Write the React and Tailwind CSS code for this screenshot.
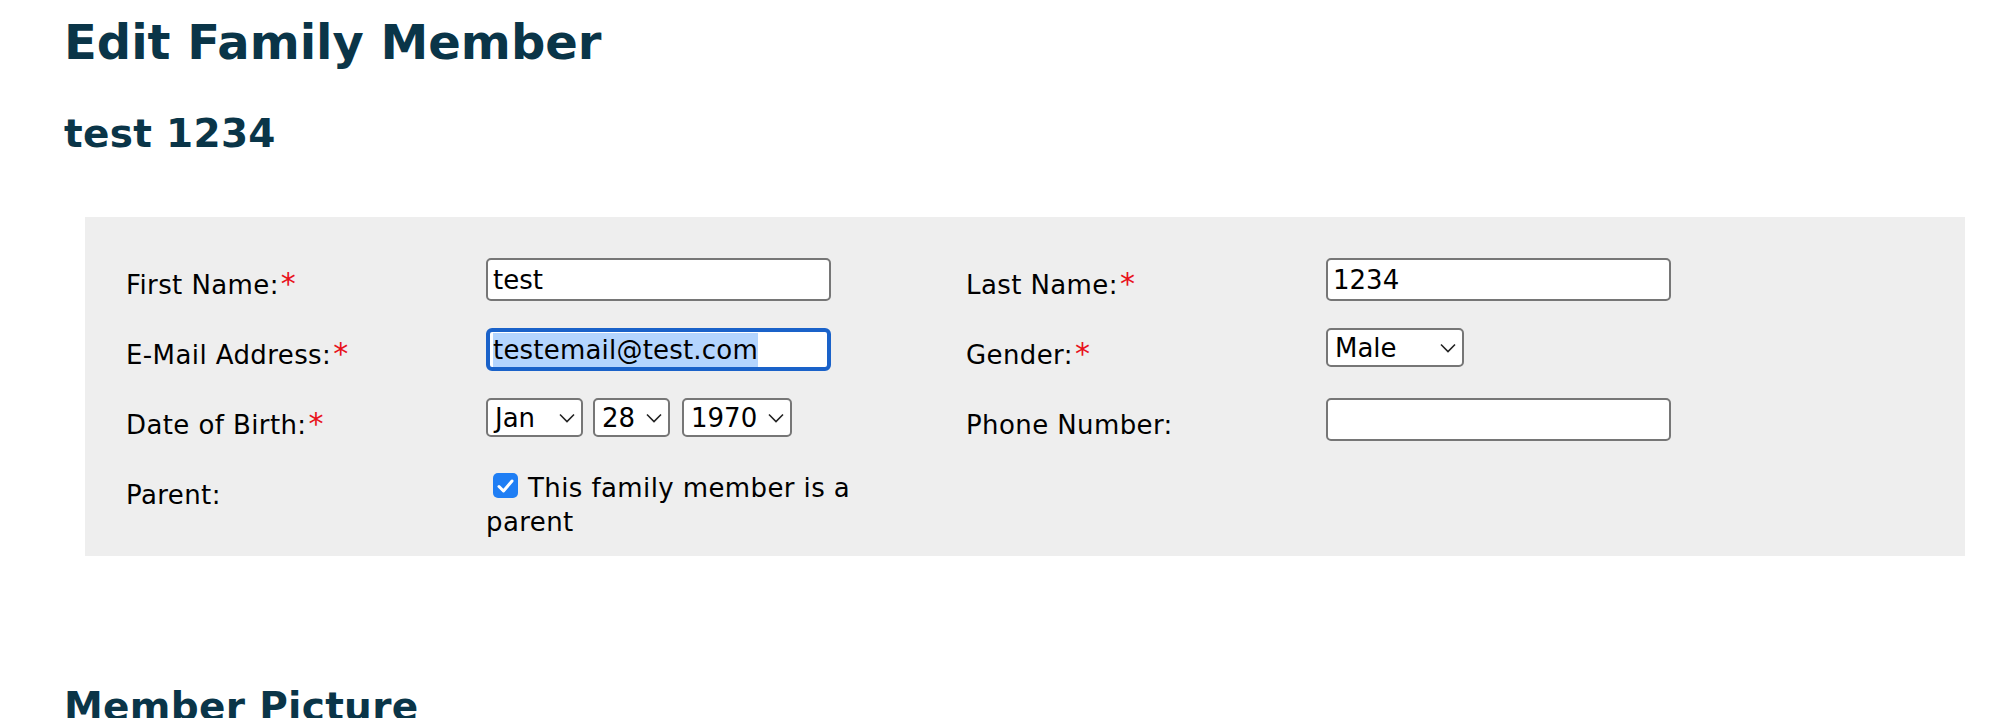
import React from 'react'

const Req = () => <span className="ml-[2px] text-[30px] leading-[20px] text-[#e8121c]">*</span>

const Label = ({ children, required }) => (
  <div className="pt-[12px] text-[26px] leading-[30px] tracking-[0.4px] text-black whitespace-nowrap">
    {children}
    {required && <Req />}
  </div>
)

const TextBox = ({ value }) => (
  <input
    type="text"
    readOnly
    value={value}
    className="block h-[43px] w-[345px] rounded-[5px] border-2 border-[#767676] bg-white px-[5px] text-[26px] leading-[30px] text-black outline-none"
  />
)

// focused e-mail field with its text selected
const EmailBox = ({ value }) => (
  <div className="flex h-[43px] w-[345px] items-center rounded-[6px] border-4 border-[#1a62c9] bg-white pl-[3px] text-[26px] leading-[34px] tracking-[0.2px] text-black">
    <span className="bg-[#b4d5fe]">{value}</span>
  </div>
)

const Chevron = () => (
  <svg width="16" height="10" viewBox="0 0 16 10" fill="none">
    <polyline points="1,1.5 8,8.5 15,1.5" stroke="#222" strokeWidth="1.6" />
  </svg>
)

const Select = ({ value, width }) => (
  <div
    className={`flex h-[39px] items-center justify-between rounded-[5px] border-2 border-[#767676] bg-white pl-[7px] pr-[6px] text-[26px] leading-[30px] text-black ${width}`}
  >
    <span>{value}</span>
    <Chevron />
  </div>
)

const App = () => {
  return (
    <div className="min-h-screen bg-white pt-[14px] font-['DejaVu_Sans',sans-serif]">
      {/* Titulos */}
      <h1 className="ml-[64px] text-[48px] leading-[56px] font-bold text-[#0a3548]">
        Edit Family Member
      </h1>
      <h2 className="ml-[64px] mt-[41px] text-[39px] leading-[46px] font-bold tracking-[0.3px] text-[#0a3548]">
        test 1234
      </h2>

      {/* Formulario */}
      <div className="ml-[85px] mr-[27px] mt-[60px] bg-[#eeeeee] pl-[41px] pt-[41px] pb-[17px]">
        <div className="grid grid-cols-[360px_480px_360px_1fr] items-start gap-y-[27px]">
          <Label required>First Name:</Label>
          <TextBox value="test" />
          <Label required>Last Name:</Label>
          <TextBox value="1234" />

          <Label required>E-Mail Address:</Label>
          <EmailBox value="testemail@test.com" />
          <Label required>Gender:</Label>
          <Select value="Male" width="w-[138px]" />

          <Label required>Date of Birth:</Label>
          <div className="flex">
            <Select value="Jan" width="w-[97px] mr-[10px]" />
            <Select value="28" width="w-[77px] mr-[12px]" />
            <Select value="1970" width="w-[110px]" />
          </div>
          <Label>Phone Number:</Label>
          <TextBox value="" />

          <Label>Parent:</Label>
          <div className="w-[380px] pt-[3px] text-[26px] leading-[34px] tracking-[0.4px] text-black">
            <span className="ml-[7px] mr-[10px] mt-[2px] inline-flex h-[25px] w-[25px] items-center justify-center rounded-[5px] bg-[#1f7ef4] align-top">
              <svg width="17" height="14" viewBox="0 0 17 14" fill="none">
                <polyline points="2,7.5 6.5,12 15,2" stroke="#fff" strokeWidth="3" strokeLinecap="round" strokeLinejoin="round" />
              </svg>
            </span>
            This family member is a parent
          </div>
          <div />
          <div />
        </div>
      </div>

      <h2 className="ml-[64px] mt-[128px] text-[39px] leading-[46px] font-bold tracking-[0.3px] text-[#0a3548]">
        Member Picture
      </h2>
    </div>
  )
}

export default App
